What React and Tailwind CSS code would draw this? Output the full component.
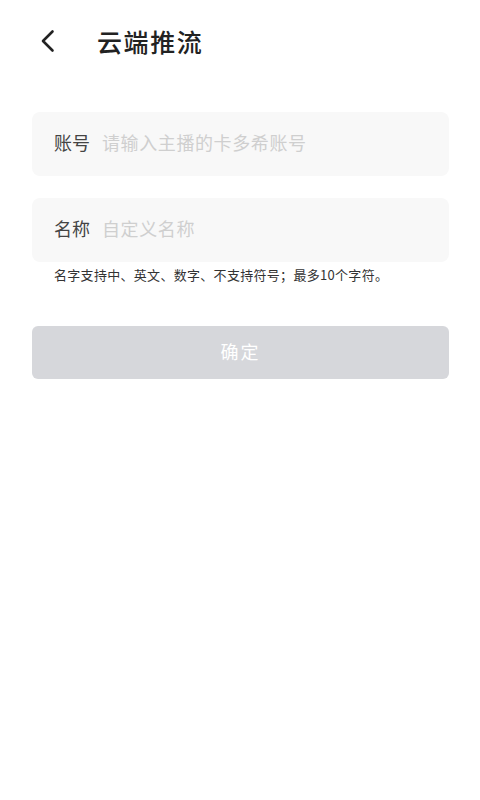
import React from "react";

const font = { fontFamily: '"Noto Sans CJK SC", "Noto Sans", sans-serif' };

export default function App() {
  return (
    <div className="w-[480px] min-h-[800px] bg-white" style={font}>
      <div className="flex items-center h-[84px] pl-[40px] pb-[2px]">
        <svg width="16" height="24" viewBox="0 0 16 24" fill="none" className="shrink-0">
          <path d="M12.5 2.5 L3 12 L12.5 21.5" stroke="#222" strokeWidth="2.6" strokeLinecap="round" strokeLinejoin="round" />
        </svg>
        <h1 className="ml-[41px] text-[25px] leading-none text-[#222] font-medium tracking-[1.6px]">云端推流</h1>
      </div>
      <div className="pl-[32px] pr-[31px] pt-[28px] flex flex-col">
        <div className="h-[64px] rounded-[8px] bg-[#f8f8f8] flex items-center px-[22px] pb-[3px]">
          <span className="text-[18px] text-[#444]">账号</span>
          <input className="ml-[12px] flex-1 bg-transparent outline-none text-[18px] tracking-[0.6px] text-[#333] placeholder:text-[#cfcfcf]" placeholder="请输入主播的卡多希账号" />
        </div>
        <div className="mt-[22px] h-[64px] rounded-[8px] bg-[#f8f8f8] flex items-center px-[22px] pb-[3px]">
          <span className="text-[18px] text-[#444]">名称</span>
          <input className="ml-[12px] flex-1 bg-transparent outline-none text-[18px] tracking-[0.6px] text-[#333] placeholder:text-[#cfcfcf]" placeholder="自定义名称" />
        </div>
        <p className="mt-[4px] pl-[22px] text-[13px] leading-[18px] tracking-[0.3px] text-[#333]">名字支持中、英文、数字、不支持符号；最多10个字符。</p>
        <button className="mt-[42px] h-[53px] rounded-[6px] bg-[#d6d7db] text-white text-[18px] tracking-[2px] pb-[2px]">确定</button>
      </div>
    </div>
  );
}
